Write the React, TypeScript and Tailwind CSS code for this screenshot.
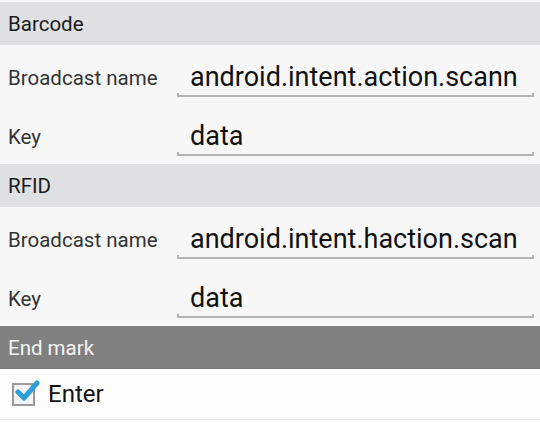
import React from "react";

function Header({ title, dark }: { title: string; dark?: boolean }) {
  return (
    <div
      className={
        dark
          ? "h-[43px] bg-[#808080] border-b border-[#757575] flex items-center pl-2 pt-[2px] text-[20.5px] text-[#f4f4f4]"
          : "h-[43px] bg-[#dfe0e2] flex items-center pl-2 pt-[2px] text-[20.5px] text-[#1a1a1a]"
      }
    >
      {title}
    </div>
  );
}

function Field({ label, value, h }: { label: string; value: string; h: string }) {
  return (
    <div className={`${h} flex items-start`}>
      <div className="w-[177px] shrink-0 whitespace-nowrap pl-2 pt-[21px] text-[20.5px] text-[#333] leading-[24px]">{label}</div>
      <div className="flex-1 min-w-0 mr-[6px] pt-[16px] flex flex-col">
        <div className="pl-[13px] pr-[16px]">
          <div className="overflow-hidden whitespace-nowrap text-[27px] leading-[32px] text-[#111]">{value}</div>
        </div>
        <div className="h-[4px] border-x-2 border-b-2 border-[#b4b4b4]" />
      </div>
    </div>
  );
}

export default function App() {
  return (
    <div
      className="w-[540px] h-[422px] bg-[#f7f7f7] pt-[2px] overflow-hidden"
      style={{ fontFamily: "Roboto, 'Noto Sans', sans-serif" }}
    >
      <Header title="Barcode" />
      <Field label="Broadcast name" value="android.intent.action.scanner" h="h-[59px]" />
      <Field label="Key" value="data" h="h-[60px]" />
      <Header title="RFID" />
      <Field label="Broadcast name" value="android.intent.haction.scan" h="h-[59px]" />
      <Field label="Key" value="data" h="h-[60px]" />
      <Header title="End mark" dark />
      <div className="h-[51px] bg-[#fdfdfd] border-b border-[#e6e6e6] flex items-center pl-3">
        <div className="relative w-[23px] h-[23px] border-2 border-[#9a9a9a] bg-[#f4f4f4]">
          <svg className="absolute left-[1px] top-[-7px]" width="26" height="26" viewBox="0 0 26 26">
            <path d="M3 14 L9 20 L22 5" fill="none" stroke="#2f9fd8" strokeWidth="5" strokeLinecap="round" strokeLinejoin="round" />
          </svg>
        </div>
        <span className="ml-[13px] text-[24px] text-[#111]">Enter</span>
      </div>
    </div>
  );
}
